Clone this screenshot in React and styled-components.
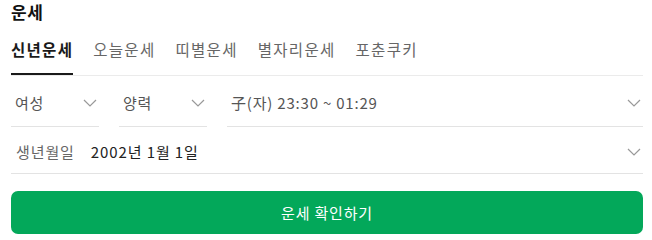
import React from 'react';
import styled, { createGlobalStyle } from 'styled-components';

const GlobalStyle = createGlobalStyle`
  body {
    margin: 0;
    background: #fff;
    font-family: "Noto Sans CJK KR", "Noto Sans", sans-serif;
  }
`;

const Wrap = styled.div`
  width: 632px;
  padding: 0 9px 0 11px;
`;

const Title = styled.h2`
  margin: 0;
  height: 28px;
  line-height: 24px;
  font-size: 17px;
  font-weight: 700;
  color: #111;
  letter-spacing: 0.5px;
`;

const Tabs = styled.div`
  display: flex;
  gap: 20px;
  height: 47px;
  border-bottom: 1px solid #ebebeb;
`;

const Tab = styled.div`
  display: flex;
  align-items: center;
  height: 100%;
  box-sizing: border-box;
  padding-bottom: 3px;
  font-size: 15.5px;
  font-weight: ${p => (p.active ? 700 : 400)};
  color: ${p => (p.active ? '#1a1a1a' : '#666')};
  border-bottom: 2px solid ${p => (p.active ? '#1a1a1a' : 'transparent')};
  margin-bottom: -1px;
  letter-spacing: 1.3px;
`;

const SelectRow = styled.div`
  display: flex;
  gap: 20px;
  height: 51px;
`;

const Select = styled.div`
  display: flex;
  align-items: center;
  justify-content: space-between;
  width: ${p => p.w || 'auto'};
  flex: ${p => (p.grow ? 1 : 'none')};
  box-sizing: border-box;
  padding: 3px 2px 0 4px;
  border-bottom: 1px solid #e3e3e3;
  font-size: 15px;
  color: #555;
  letter-spacing: 0.8px;
`;

const DateRow = styled.div`
  display: flex;
  align-items: center;
  height: 47px;
  box-sizing: border-box;
  padding: 3px 2px 0 5px;
  border-bottom: 1px solid #e3e3e3;
  letter-spacing: 0.9px;
`;

const Label = styled.span`
  font-size: 15px;
  color: #666;
  margin-right: 16px;
`;

const Value = styled.span`
  flex: 1;
  font-size: 15px;
  color: #222;
`;

const Button = styled.button`
  display: block;
  width: 632px;
  height: 43px;
  margin-top: 17px;
  padding-bottom: 2px;
  border: 0;
  border-radius: 7px;
  background: #03a85a;
  color: #fff;
  font-family: inherit;
  font-size: 15px;
  letter-spacing: 0.8px;
`;

const Chevron = () => (
  <svg width="14" height="8" viewBox="0 0 14 8" fill="none">
    <path d="M1 1l6 6 6-6" stroke="#999" strokeWidth="1.2" />
  </svg>
);

export default function App() {
  const tabs = ['신년운세', '오늘운세', '띠별운세', '별자리운세', '포춘쿠키'];
  return (
    <Wrap>
      <GlobalStyle />
      <Title>운세</Title>
      <Tabs>
        {tabs.map((t, i) => (
          <Tab key={t} active={i === 0}>{t}</Tab>
        ))}
      </Tabs>
      <SelectRow>
        <Select w="88px">여성<Chevron /></Select>
        <Select w="88px">양력<Chevron /></Select>
        <Select grow>子(자) 23:30 ~ 01:29<Chevron /></Select>
      </SelectRow>
      <DateRow>
        <Label>생년월일</Label>
        <Value>2002년 1월 1일</Value>
        <Chevron />
      </DateRow>
      <Button>운세 확인하기</Button>
    </Wrap>
  );
}
